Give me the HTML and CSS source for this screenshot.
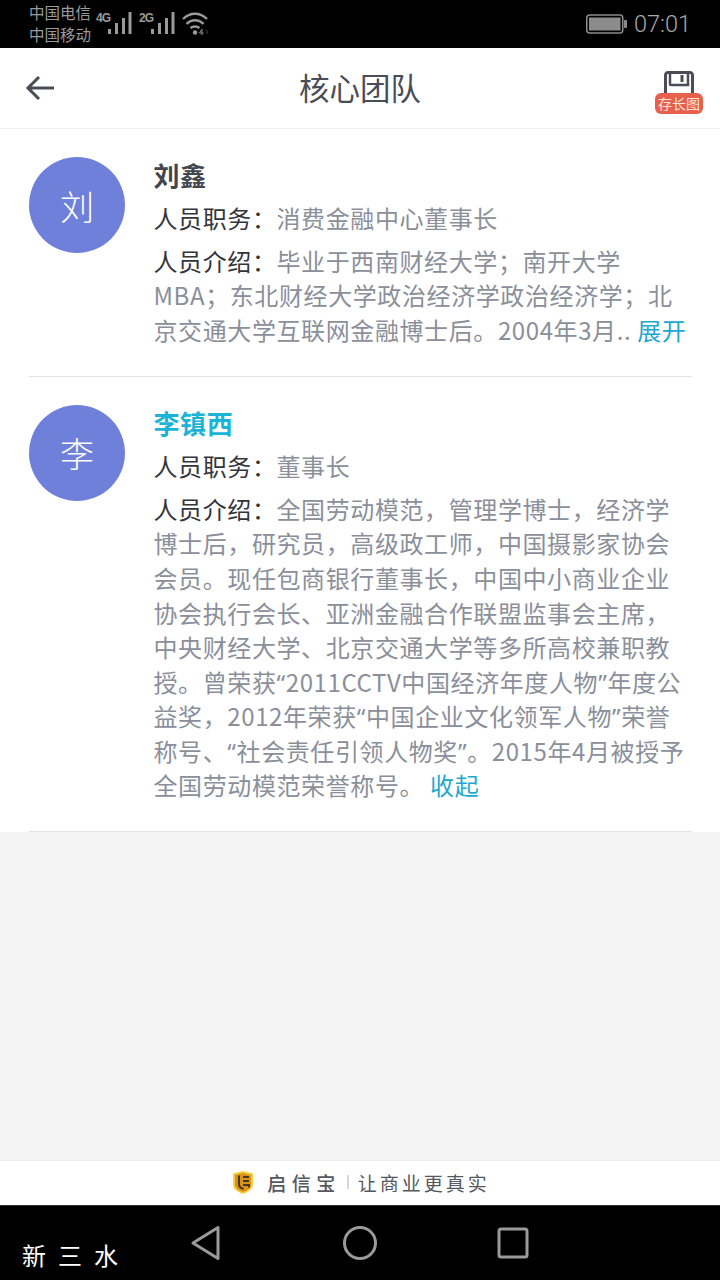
FILE: index.html
```html
<!DOCTYPE html>
<html lang="zh-CN">
<head>
  <meta charset="UTF-8">
  <title>核心团队</title>
  <link rel="stylesheet" href="styles.css">
</head>
<body>
  <div class="page">
    <div class="status-bar">
      <div class="carriers"><span>中国电信</span><span>中国移动</span></div>
      <div class="signal">
        <span class="net">4G</span>
        <svg width="24" height="24" viewBox="0 0 24 24"><g fill="#9a9a9a"><rect x="0" y="17" width="3" height="5"/><rect x="7" y="11" width="3" height="11"/><rect x="14" y="6" width="3" height="16"/><rect x="20.500" y="0" width="3" height="22"/></g></svg>
      </div>
      <div class="signal">
        <span class="net">2G</span>
        <svg width="24" height="24" viewBox="0 0 24 24"><g fill="#9a9a9a"><rect x="0" y="17" width="3" height="5"/><rect x="7" y="11" width="3" height="11"/><rect x="14" y="6" width="3" height="16"/><rect x="20.500" y="0" width="3" height="22"/></g></svg>
      </div>
      <svg class="wifi" width="28" height="24" viewBox="0 0 28 24"><g fill="none" stroke="#9a9a9a" stroke-width="2.400"><path d="M1 7C8 0 18 0 25 7"/><path d="M4.500 12C9.500 7 16.500 7 21.500 12"/><path d="M8.500 16C11 14 15 14 17.500 16"/></g><circle cx="13" cy="20.500" r="2.200" fill="#9a9a9a"/><path d="M20 17l-2.500 4h4M20 17v6" fill="none" stroke="#8a8a8a" stroke-width="1"/><path d="M25 18v4" stroke="#444" stroke-width="1"/></svg>
      <div class="status-right">
        <svg width="41" height="20" viewBox="0 0 41 20"><rect x="0.750" y="1" width="36" height="18" rx="3" fill="none" stroke="#8c8c8c" stroke-width="1.500"/><rect x="3" y="3.500" width="31.500" height="13" fill="#8c8c8c"/><rect x="38" y="6" width="3" height="8" rx="1" fill="#8c8c8c"/></svg>
        <span class="time">07:01</span>
      </div>
    </div>

    <div class="header">
      <div class="back">
        <svg width="30" height="30" viewBox="0 0 30 30"><path d="M29 15H3M14 4L3 15l11 11" fill="none" stroke="#4a4d55" stroke-width="3"/></svg>
      </div>
      <h1>核心团队</h1>
      <div class="save">
        <svg width="30" height="24" viewBox="0 0 30 24"><path d="M1.500 24V4a2.500 2.500 0 0 1 2.500-2.500h22a2.500 2.500 0 0 1 2.500 2.500v20" fill="none" stroke="#4a4d55" stroke-width="3"/><path d="M6 2v11a1 1 0 0 0 1 1h17V2" fill="none" stroke="#4a4d55" stroke-width="2.500"/><rect x="16.500" y="4" width="3" height="7" fill="#4a4d55"/></svg>
        <span class="save-tag">存长图</span>
      </div>
    </div>

    <div class="list">
      <div class="person">
        <div class="avatar">刘</div>
        <div class="info">
          <div class="name">刘鑫</div>
          <div class="row"><span class="label">人员职务：</span>消费金融中心董事长</div>
          <div class="row intro"><span class="label">人员介绍：</span>毕业于西南财经大学；南开大学<br>MBA；东北财经大学政治经济学政治经济学；北<br>京交通大学互联网金融博士后。2004年3月.. <span class="toggle">展开</span></div>
        </div>
      </div>
      <div class="person">
        <div class="avatar">李</div>
        <div class="info">
          <div class="name active">李镇西</div>
          <div class="row"><span class="label">人员职务：</span>董事长</div>
          <div class="row intro"><span class="label">人员介绍：</span>全国劳动模范，管理学博士，经济学<br>博士后，研究员，高级政工师，中国摄影家协会<br>会员。现任包商银行董事长，中国中小商业企业<br>协会执行会长、亚洲金融合作联盟监事会主席，<br>中央财经大学、北京交通大学等多所高校兼职教<br>授。曾荣获<span class="quote">“</span>2011CCTV中国经济年度人物<span class="quote">”</span>年度公<br>益奖，2012年荣获<span class="quote">“</span>中国企业文化领军人物<span class="quote">”</span>荣誉<br>称号、<span class="quote">“</span>社会责任引领人物奖<span class="quote">”</span>。2015年4月被授予<br>全国劳动模范荣誉称号。 <span class="toggle">收起</span></div>
        </div>
      </div>
    </div>

    <div class="spacer"></div>

    <div class="brand">
      <svg width="22" height="25" viewBox="0 0 22 25"><path d="M11 1l10 2.500v11c0 4.500-4.500 7.500-10 9.500C5.500 22 1 19 1 14.500v-11z" fill="#f6cf3c"/><path d="M11 3l8 2v9.500c0 3.500-3.500 6-8 7.500-4.500-1.500-8-4-8-7.500V5z" fill="#d9921a"/><path d="M7 5.500v9c0 2 1.500 3.500 4.500 4.500M11 7h6M11 11h6M11 15h6v2.500" fill="none" stroke="#4a3716" stroke-width="2"/></svg>
      <span class="brand-name">启信宝</span>
      <span class="brand-sep"></span>
      <span class="brand-slogan">让商业更真实</span>
    </div>

    <div class="nav-bar">
      <span class="watermark">新三水</span>
      <svg class="nav-back" width="32" height="36" viewBox="0 0 32 36"><path d="M28 2.500V33.500L3 18z" fill="none" stroke="#9a9a9a" stroke-width="3" stroke-linejoin="round"/></svg>
      <svg class="nav-home" width="34" height="34" viewBox="0 0 34 34"><circle cx="17" cy="17" r="15.500" fill="none" stroke="#9a9a9a" stroke-width="3"/></svg>
      <svg class="nav-recent" width="32" height="32" viewBox="0 0 32 32"><rect x="2" y="2" width="28" height="28" rx="2" fill="none" stroke="#9a9a9a" stroke-width="3"/></svg>
    </div>
  </div>
</body>
</html>
```

FILE: styles.css
```css
* {
  box-sizing: border-box;
}

body {
  margin: 0;
  font-family: "Noto Sans CJK SC", "Noto Sans", sans-serif;
  background-color: #f4f4f4;
}

.page {
  width: 720px;
  height: 1280px;
  display: flex;
  flex-direction: column;
  overflow: hidden;
}

.status-bar {
  height: 48px;
  background-color: #000;
  color: #9a9a9a;
  display: flex;
  align-items: center;
  padding: 0 29px;
}

.carriers {
  display: flex;
  flex-direction: column;
  font-size: 15.500px;
  line-height: 21.500px;
  width: 67px;
  margin-top: -1px;
}

.signal {
  display: flex;
  align-items: flex-end;
  margin-right: 7px;
}

.net {
  font-size: 12px;
  font-weight: 700;
  line-height: 12px;
  letter-spacing: -0.800px;
  align-self: flex-start;
  width: 12px;
  font-family: "Liberation Sans", sans-serif;
}

.status-right {
  margin-left: auto;
  display: flex;
  align-items: center;
  gap: 7px;
}

.time {
  font-size: 23.500px;
  font-weight: 300;
  color: #a8a8a8;
  font-family: Roboto, sans-serif;
}

.header {
  height: 81px;
  background-color: #fff;
  border-bottom: 1px solid #f0f0f0;
  display: flex;
  align-items: center;
  justify-content: space-between;
  padding: 0 17px 0 25px;
}

.back {
  width: 48px;
  display: flex;
}

.header h1 {
  margin: -2px 0 0;
  font-size: 30.500px;
  font-weight: 400;
  color: #4a4d55;
  padding-right: 8px;
}

.save {
  width: 48px;
  display: flex;
  flex-direction: column;
  align-items: center;
  margin-top: 9px;
}

.save-tag {
  background-color: #e8604c;
  color: #fde3dc;
  font-size: 14px;
  line-height: 21px;
  width: 48px;
  text-align: center;
  border-radius: 6px;
  margin-top: -2px;
}

.list {
  background-color: #fff;
  padding: 0 28px 0 29px;
}

.person {
  display: flex;
  border-bottom: 1px solid #e2e2e2;
  padding-top: 28px;
  padding-bottom: 28.400px;
}

.avatar {
  width: 96px;
  height: 96px;
  flex: none;
  border-radius: 50%;
  background-color: #6f80db;
  color: #fff;
  font-size: 34px;
  font-weight: 300;
  display: flex;
  align-items: center;
  justify-content: center;
}

.info {
  margin-left: 28.500px;
  flex: 1;
  font-size: 24px;
  line-height: 34.600px;
  color: #8b8f9a;
  letter-spacing: 0.600px;
  white-space: nowrap;
}

.name {
  font-size: 26px;
  font-weight: 700;
  line-height: 36px;
  color: #43464e;
  margin-bottom: 8.200px;
}

.name.active {
  color: #1cb3d8;
}

.row {
  margin-bottom: 8px;
}

.intro {
  margin-bottom: 0;
}

.label {
  font-family: "Noto Sans CJK TC", sans-serif;
  color: #33353b;
}

.quote {
  font-family: "Noto Sans", sans-serif;
  line-height: 0;
}

.toggle {
  color: #1ea7cf;
}

.spacer {
  flex: 1;
}

.brand {
  height: 45px;
  background-color: #fff;
  border-top: 1px solid #ececec;
  display: flex;
  align-items: center;
  justify-content: center;
  color: #55585f;
  font-size: 19px;
  letter-spacing: 3px;
  padding: 0 0 2px 2px;
}

.brand-name {
  margin-left: 13px;
  font-weight: 500;
  letter-spacing: 5.500px;
}

.brand-sep {
  width: 2px;
  height: 14px;
  background-color: #d8d8d8;
  margin: 0 9px 0 6px;
}

.nav-bar {
  height: 75px;
  background-color: #000;
  border-top: 1px solid #2a2a2a;
  position: relative;
}

.watermark {
  position: absolute;
  left: 22px;
  top: 32px;
  color: #fff;
  font-size: 24px;
  letter-spacing: 12px;
  line-height: 34px;
}

.nav-bar svg {
  position: absolute;
}

.nav-back {
  left: 190px;
  top: 19px;
}

.nav-home {
  left: 343px;
  top: 20px;
}

.nav-recent {
  left: 497px;
  top: 21px;
}
```
